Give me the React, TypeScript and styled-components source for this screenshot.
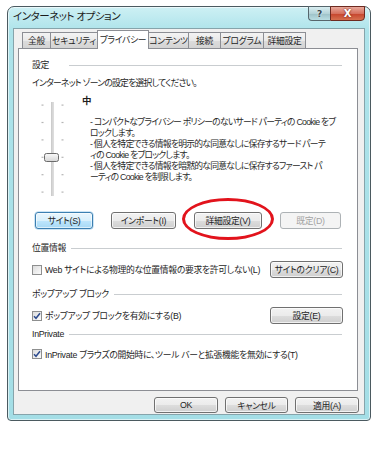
import styled, { createGlobalStyle, css } from "styled-components";

// ── GLOBAL ──────────────────────────────

const GlobalStyle = createGlobalStyle`
  html, body {
    margin: 0;
    padding: 0;
    background: #ffffff;
  }
  body {
    font-family: "Liberation Sans", "Noto Sans CJK JP", sans-serif;
    font-feature-settings: "palt";
    color: #1e1e1e;
  }
`;

// ── WINDOW FRAME ────────────────────────

const Window = styled.div`
  position: relative;
  box-sizing: border-box;
  margin: 6px 0 0 7px;
  width: 364px;
  height: 415px;
  display: flex;
  flex-direction: column;
  padding: 0 5px 5px;
  border: 1px solid #4b5a60;
  border-radius: 7px 7px 4px 4px;
  background: linear-gradient(#cdf0f4, #ade3ea 24px, #a4dee6);
  box-shadow: inset 0 0 0 1px rgba(255, 255, 255, 0.6);
`;

const TitleBar = styled.div`
  height: 21px;
  display: flex;
  align-items: flex-start;
`;

const Title = styled.div`
  padding-top: 2px;
  font-size: 10.5px;
  line-height: 14px;
  letter-spacing: -0.5px;
  color: #1a1a1a;
  white-space: nowrap;
`;

const Caption = styled.div`
  margin-left: auto;
  margin-top: -1px;
  display: flex;
`;

const CaptionButton = styled.div<{ $kind: "help" | "close" }>`
  height: 15px;
  box-sizing: border-box;
  display: flex;
  align-items: center;
  justify-content: center;
  border: 1px solid #56666c;
  font-family: "DejaVu Sans", sans-serif;
  font-weight: bold;
  color: #ffffff;

  ${({ $kind }) =>
    $kind === "help"
      ? css`
          width: 22px;
          border-right: none;
          border-radius: 0 0 0 4px;
          background: linear-gradient(#d9eef1, #b4d3d8 50%, #9cc1c7 51%, #b9dde2);
          font-size: 9px;
          color: #37474c;
          text-shadow: 0 0 2px #ffffff;
        `
      : css`
          width: 35px;
          border-radius: 0 0 4px 0;
          border-color: #6d2a20;
          background: linear-gradient(#e9a99c, #d6715e 50%, #c5432c 51%, #d6704f);
          font-size: 10px;
          text-shadow: 0 0 2px #5a1208;
        `}
`;

// ── CLIENT AREA ─────────────────────────

const Client = styled.div`
  flex: 1;
  display: flex;
  flex-direction: column;
  padding: 0 6px 0 4px;
  background: #f0f0f0;
  border: 1px solid #86a4ab;
  font-size: 8.8px;
  letter-spacing: -0.3px;
`;

const TabStrip = styled.div`
  height: 19px;
  display: flex;
  align-items: flex-end;
  padding-left: 4px;
`;

const Tab = styled.div<{ $w: number; $active?: boolean }>`
  position: relative;
  box-sizing: border-box;
  width: ${({ $w }) => $w}px;
  height: 16px;
  margin-left: -1px;
  display: flex;
  align-items: center;
  justify-content: center;
  white-space: nowrap;
  color: #1e1e1e;
  border: 1px solid #8c8e94;
  border-bottom: none;
  background: linear-gradient(#f3f3f3, #e9e9e9 50%, #dcdcdc 51%, #d4d4d4);

  &:first-child {
    margin-left: 0;
  }

  ${({ $active }) =>
    $active &&
    css`
      height: 19px;
      margin-bottom: -1px;
      z-index: 1;
      background: #ffffff;
      padding-bottom: 2px;
    `}
`;

const Panel = styled.div`
  height: 343px;
  box-sizing: border-box;
  display: flex;
  flex-direction: column;
  padding: 0 15px 0 13px;
  background: #ffffff;
  border: 1px solid #8c8e94;
`;

// ── PANEL PARTS ─────────────────────────

const GroupHeader = styled.div<{ $top: number; $gap?: number }>`
  margin-top: ${({ $top }) => $top}px;
  height: 12px;
  line-height: 12px;
  display: flex;
  align-items: center;
  white-space: nowrap;
  color: #1e1e1e;

  &::after {
    content: "";
    flex: 1;
    height: 1px;
    margin-left: ${({ $gap }) => $gap ?? 5}px;
    background: #c9cdd0;
  }
`;

const Instruction = styled.div`
  margin-top: 6px;
  height: 12px;
  line-height: 12px;
  letter-spacing: -0.75px;
  white-space: nowrap;
`;

const PrivacyBlock = styled.div`
  margin-top: 6px;
  height: 102px;
  display: flex;
`;

const Trackbar = styled.svg`
  margin-left: 6px;
  flex: none;
`;

const LevelColumn = styled.div`
  margin-left: 14px;
  display: flex;
  flex-direction: column;
`;

const LevelName = styled.div`
  height: 12px;
  line-height: 12px;
  font-size: 9.5px;
  font-weight: bold;
`;

const LevelText = styled.div`
  margin-top: 10px;
  padding-left: 8px;
  display: flex;
  flex-direction: column;
  gap: 1px;
  color: #2a2a2a;
  line-height: 10.5px;
  letter-spacing: -0.75px;
  white-space: nowrap;
`;

const ButtonRow = styled.div`
  margin-top: 15px;
  padding-left: 3px;
  display: flex;
  gap: 18px;
`;

const Anchor = styled.div`
  position: relative;
  display: flex;
`;

const RedCircle = styled.div`
  position: absolute;
  left: -12px;
  top: -14px;
  width: 92px;
  height: 42px;
  box-sizing: border-box;
  border: 3px solid #e2131c;
  border-radius: 50%;
  pointer-events: none;
`;

const Button = styled.div<{ $w: number; $h?: number; $state?: "focus" | "disabled" }>`
  box-sizing: border-box;
  width: ${({ $w }) => $w}px;
  height: ${({ $h }) => $h ?? 17}px;
  display: flex;
  align-items: center;
  justify-content: center;
  white-space: nowrap;
  color: #1e1e1e;
  border: 1px solid #707070;
  border-radius: 3px;
  background: linear-gradient(#f2f2f2, #ebebeb 50%, #dddddd 51%, #cfcfcf);
  box-shadow: inset 0 0 0 1px rgba(255, 255, 255, 0.7);

  ${({ $state }) =>
    $state === "focus" &&
    css`
      border-color: #3c7fb1;
      background: linear-gradient(#eaf6fd, #d9f0fc 50%, #bee6fd 51%, #a7d9f5);
      box-shadow: inset 0 0 0 1px rgba(255, 255, 255, 0.6), 0 0 0 0.5px #9ccbeb;
    `}

  ${({ $state }) =>
    $state === "disabled" &&
    css`
      border-color: #adb2b5;
      background: #f4f4f4;
      color: #a3a3a3;
      box-shadow: none;
    `}
`;

const CheckRow = styled.div<{ $top: number; $h?: number }>`
  margin-top: ${({ $top }) => $top}px;
  height: ${({ $h }) => $h ?? 17}px;
  display: flex;
  align-items: center;
`;

const CheckBox = styled.div`
  flex: none;
  box-sizing: border-box;
  width: 10px;
  height: 10px;
  display: flex;
  align-items: center;
  justify-content: center;
  border: 1px solid #8e8f8f;
  background: linear-gradient(135deg, #dcdcdc, #fbfbfb);
`;

const CheckLabel = styled.span`
  margin-left: 3px;
  white-space: nowrap;
`;

const RowButton = styled.div`
  margin-left: auto;
  margin-right: -1px;
`;

// ── FOOTER ──────────────────────────────

const Footer = styled.div`
  flex: 1;
  display: flex;
  justify-content: flex-end;
  align-items: flex-start;
  gap: 7px;
  padding-top: 6px;
  margin-right: -1px;
`;

// ── DRAWINGS ────────────────────────────

const ticks = [10, 27.4, 44.8, 62.2, 79.6, 97];

function PrivacySlider() {
  return (
    <Trackbar width="30" height="102" viewBox="0 0 30 102">
      <rect x="13" y="7" width="2.5" height="94" fill="#b9b9b9" />
      <rect x="13.6" y="7" width="1" height="94" fill="#e9e9e9" />
      {ticks.map((t) => (
        <g key={t} fill="#b5b5b5">
          <rect x="3.5" y={t - 0.5} width="2" height="1.2" />
          <rect x="23.5" y={t - 0.5} width="2" height="1.2" />
        </g>
      ))}
      <defs>
        <linearGradient id="thumb" x1="0" y1="0" x2="0" y2="1">
          <stop offset="0" stopColor="#fafafa" />
          <stop offset="1" stopColor="#d6d6d6" />
        </linearGradient>
      </defs>
      <rect x="6.5" y="58.5" width="14" height="8" rx="2" fill="url(#thumb)" stroke="#6b6b6b" />
    </Trackbar>
  );
}

function Check() {
  return (
    <svg width="8" height="8" viewBox="0 0 8 8">
      <path d="M1 4.2 L3 6.3 L7 1.2" fill="none" stroke="#2d4b8e" strokeWidth="1.5" />
    </svg>
  );
}

// ── APP ─────────────────────────────────

export default function App() {
  return (
    <>
      <GlobalStyle />
      <Window>
        <TitleBar>
          <Title>インターネット オプション</Title>
          <Caption>
            <CaptionButton $kind="help">?</CaptionButton>
            <CaptionButton $kind="close">X</CaptionButton>
          </Caption>
        </TitleBar>

        <Client>
          <TabStrip>
            <Tab $w={29}>全般</Tab>
            <Tab $w={48}>セキュリティ</Tab>
            <Tab $w={52} $active>
              プライバシー
            </Tab>
            <Tab $w={41}>コンテンツ</Tab>
            <Tab $w={33}>接続</Tab>
            <Tab $w={44}>プログラム</Tab>
            <Tab $w={43}>詳細設定</Tab>
          </TabStrip>

          <Panel>
            <GroupHeader $top={10} $gap={20}>
              設定
            </GroupHeader>
            <Instruction>インターネット ゾーンの設定を選択してください。</Instruction>

            <PrivacyBlock>
              <PrivacySlider />
              <LevelColumn>
                <LevelName>中</LevelName>
                <LevelText>
                  <div>
                    - コンパクトなプライバシー ポリシーのないサード パーティの Cookie をブ
                    <br />
                    ロックします。
                  </div>
                  <div>
                    - 個人を特定できる情報を明示的な同意なしに保存するサード パーテ
                    <br />
                    ィの Cookie をブロックします。
                  </div>
                  <div>
                    - 個人を特定できる情報を暗黙的な同意なしに保存するファースト パ
                    <br />
                    ーティの Cookie を制限します。
                  </div>
                </LevelText>
              </LevelColumn>
            </PrivacyBlock>

            <ButtonRow>
              <Button $w={58} $state="focus">
                サイト(S)
              </Button>
              <Button $w={65}>インポート(I)</Button>
              <Anchor>
                <Button $w={68}>詳細設定(V)</Button>
                <RedCircle />
              </Anchor>
              <Button $w={61} $state="disabled">
                既定(D)
              </Button>
            </ButtonRow>

            <GroupHeader $top={13}>位置情報</GroupHeader>
            <CheckRow $top={7}>
              <CheckBox />
              <CheckLabel>Web サイトによる物理的な位置情報の要求を許可しない(L)</CheckLabel>
              <RowButton>
                <Button $w={73}>サイトのクリア(C)</Button>
              </RowButton>
            </CheckRow>

            <GroupHeader $top={10}>ポップアップ ブロック</GroupHeader>
            <CheckRow $top={7}>
              <CheckBox>
                <Check />
              </CheckBox>
              <CheckLabel>ポップアップ ブロックを有効にする(B)</CheckLabel>
              <RowButton>
                <Button $w={73}>設定(E)</Button>
              </RowButton>
            </CheckRow>

            <GroupHeader $top={4}>InPrivate</GroupHeader>
            <CheckRow $top={7} $h={14}>
              <CheckBox>
                <Check />
              </CheckBox>
              <CheckLabel>InPrivate ブラウズの開始時に、ツール バーと拡張機能を無効にする(T)</CheckLabel>
            </CheckRow>
          </Panel>

          <Footer>
            <Button $w={64} $h={16}>
              OK
            </Button>
            <Button $w={63} $h={16}>
              キャンセル
            </Button>
            <Button $w={64} $h={16}>
              適用(A)
            </Button>
          </Footer>
        </Client>
      </Window>
    </>
  );
}
